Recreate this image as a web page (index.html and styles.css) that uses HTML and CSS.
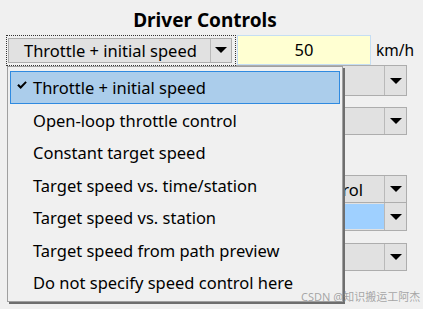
FILE: index.html
```html
<!DOCTYPE html>
<html lang="en">
<head>
    <meta charset="UTF-8">
    <title>Driver Controls</title>
    <link rel="stylesheet" href="styles.css">
</head>
<body>
    <div class="panel">
        <h1 class="title">Driver Controls</h1>

        <div class="row-main">
            <div class="focus-ring">
                <div class="combo combo-main">
                    <span class="combo-text">Throttle + initial speed</span>
                    <span class="combo-btn"><span class="arrow"></span></span>
                </div>
            </div>
            <div class="speed-box">50</div>
            <span class="unit">km/h</span>
        </div>

        <div class="side">
            <div class="combo combo-side row2">
                <span class="combo-text"></span>
                <span class="combo-btn"><span class="arrow"></span></span>
            </div>
            <div class="combo combo-side row3">
                <span class="combo-text"></span>
                <span class="combo-btn"><span class="arrow"></span></span>
            </div>
            <div class="combo combo-side row4">
                <span class="combo-text">Speed control</span>
                <span class="combo-btn"><span class="arrow"></span></span>
            </div>
            <div class="combo combo-side row5">
                <span class="combo-text field-blue"></span>
                <span class="combo-btn"><span class="arrow"></span></span>
            </div>
            <div class="combo combo-side row6">
                <span class="combo-text"></span>
                <span class="combo-btn"><span class="arrow"></span></span>
            </div>
        </div>

        <ul class="dropdown">
            <li class="item selected">
                <svg class="check" width="10" height="9" viewBox="0 0 10 9">
                    <path d="M0.2 4.6 L1.8 3 L3.7 4.9 L8.4 0.2 L9.8 1.6 L3.7 7.9 Z" fill="#000"/>
                </svg>
                Throttle + initial speed
            </li>
            <li class="item">Open-loop throttle control</li>
            <li class="item">Constant target speed</li>
            <li class="item">Target speed vs. time/station</li>
            <li class="item">Target speed vs. station</li>
            <li class="item">Target speed from path preview</li>
            <li class="item">Do not specify speed control here</li>
        </ul>

        <div class="watermark">CSDN @知识搬运工阿杰</div>
    </div>
</body>
</html>
```

FILE: styles.css
```css
body {
    margin: 0;
    background-color: #f0f0f0;
    font-family: "Noto Sans", "Open Sans", sans-serif;
    color: #000;
}
.panel {
    position: relative;
    width: 423px;
    height: 309px;
    overflow: hidden;
}
.title {
    margin: 0;
    padding-top: 7px;
    height: 28px;
    font-size: 19px;
    font-weight: bold;
    text-align: center;
    line-height: 26px;
    padding-right: 13px;
}
.row-main {
    display: flex;
    align-items: center;
    padding-left: 6px;
    height: 30px;
}
.focus-ring {
    border: 1px dotted #333;
    padding: 2px 1px;
    width: 226px;
    height: 25px;
}
.combo {
    display: flex;
    background-color: #e1e1e1;
    border: 1px solid #adadad;
    box-sizing: border-box;
}
.combo-main {
    height: 25px;
    width: 224px;
}
.combo-text {
    flex: 1;
    font-size: 16.5px;
    line-height: 23px;
    padding-left: 15px;
    white-space: nowrap;
    overflow: hidden;
}
.combo-btn {
    width: 20px;
    border-left: 1px solid #b9b9b9;
    display: flex;
    align-items: center;
    justify-content: center;
}
.arrow {
    width: 0;
    height: 0;
    border-left: 6px solid transparent;
    border-right: 6px solid transparent;
    border-top: 6px solid #000;
}
.speed-box {
    width: 132px;
    height: 28px;
    margin-left: 1px;
    background-color: #ffffd2;
    border: 1px solid #c5def3;
    font-size: 16.5px;
    line-height: 28px;
    text-align: center;
}
.unit {
    font-size: 15.5px;
    margin-left: 5px;
}
.side {
    display: flex;
    flex-direction: column;
    margin-left: 236px;
    width: 171px;
}
.combo-side {
    height: 30px;
}
.combo-side .combo-btn {
    width: 21px;
}
.combo-side .combo-text {
    line-height: 27px;
    padding-left: 4px;
    display: flex;
    justify-content: flex-end;
    padding-right: 21px;
}
.row2 {
    height: 31px;
}
.row3 {
    margin-top: 11px;
    height: 28px;
}
.row4 {
    margin-top: 40px;
    height: 28px;
}
.row5 {
    height: 28px;
    border-top: none;
}
.row6 {
    margin-top: 12px;
    height: 28px;
}
.field-blue {
    background-color: #9fd0ff;
    margin: 1px 0 1px 0;
}
.dropdown {
    position: absolute;
    left: 7px;
    top: 66px;
    width: 330px;
    margin: 0;
    padding: 4px 2px 2px 2px;
    list-style: none;
    background-color: #f0f0f0;
    border: 1px solid #a0a0a0;
    box-shadow: 2px 2px 0 #6e6e6e;
}
.item {
    position: relative;
    height: 32.5px;
    line-height: 31px;
    font-size: 16.5px;
    padding-left: 22px;
    box-sizing: border-box;
    border: 1px solid transparent;
    white-space: nowrap;
}
.item.selected {
    background-color: #abcdeb;
    border-color: #2f8ae0;
}
.check {
    position: absolute;
    left: 6px;
    top: 9px;
}
.watermark {
    position: absolute;
    left: 301px;
    top: 288px;
    font-size: 11px;
    color: rgba(140, 140, 140, 0.75);
    font-family: "Noto Sans", "Noto Sans CJK SC", sans-serif;
}
```
